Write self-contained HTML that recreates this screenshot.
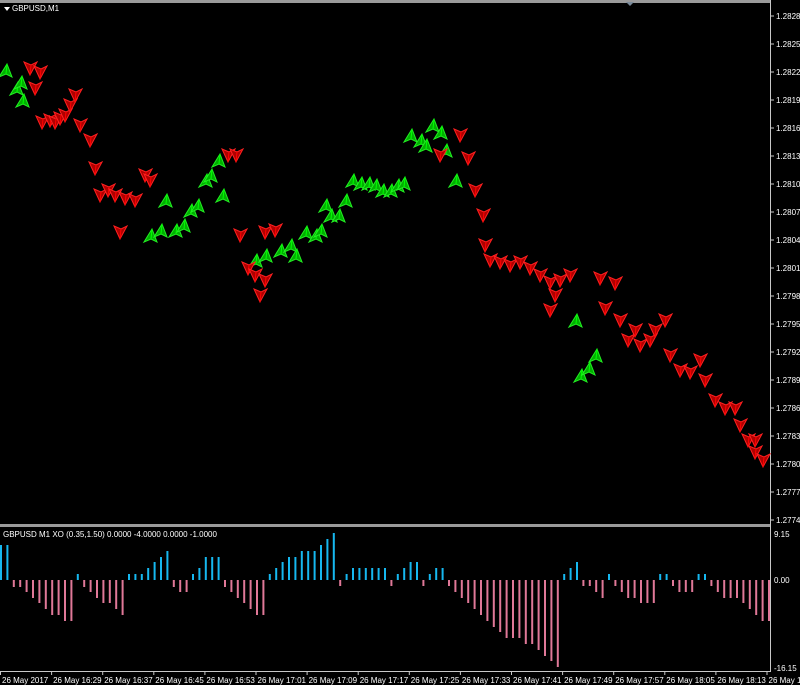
<!DOCTYPE html>
<html><head><meta charset="utf-8"><style>
html,body{margin:0;padding:0;background:#000;width:800px;height:685px;overflow:hidden}
svg{display:block}
text{font-family:"Liberation Sans",sans-serif;font-size:8px;fill:#fff}
</style></head><body>
<svg id="s" width="800" height="685" xmlns="http://www.w3.org/2000/svg">
<rect width="800" height="685" fill="#000"/>
<rect x="0" y="0" width="771" height="3" fill="#9a9a9a"/>
<polygon points="626,2 634,2 630,6" fill="#7a8a9a"/>
<polygon points="4,7 10,7 7,11" fill="#fff"/>
<text x="12" y="11">GBPUSD,M1</text>
<rect x="0" y="524" width="771" height="3" fill="#9a9a9a"/>
<line x1="770.5" y1="0" x2="770.5" y2="672" stroke="#c8c8c8"/>
<line x1="0" y1="671.5" x2="771" y2="671.5" stroke="#c8c8c8"/>
<text x="3" y="537">GBPUSD M1 XO (0.35,1.50) 0.0000 -4.0000 0.0000 -1.0000</text>
<text x="774" y="537">9.15</text>
<text x="774" y="583">0.00</text>
<text x="774" y="671">-16.15</text>
<g id="g"></g>
</svg>
<script>
var g=document.getElementById('g'),h='';
var p=['1.28285','1.28255','1.28225','1.28195','1.28165','1.28135','1.28105','1.28075','1.28045','1.28015','1.27985','1.27955','1.27925','1.27895','1.27865','1.27835','1.27805','1.27775','1.27745'];
for(var i=0;i<p.length;i++){var y=16+i*28.0;h+='<line x1="770" y1="'+y+'" x2="774" y2="'+y+'" stroke="#c8c8c8"/><text x="776" y="'+(y+3)+'">'+p[i]+'</text>';}
var t=['26 May 2017','26 May 16:29','26 May 16:37','26 May 16:45','26 May 16:53','26 May 17:01','26 May 17:09','26 May 17:17','26 May 17:25','26 May 17:33','26 May 17:41','26 May 17:49','26 May 17:57','26 May 18:05','26 May 18:13','26 May 1'];
for(i=0;i<t.length;i++){var x=i*51.1;h+='<line x1="'+(x+0.5)+'" y1="671" x2="'+(x+0.5)+'" y2="675" stroke="#c8c8c8"/><text x="'+(x+2)+'" y="683">'+t[i]+'</text>';}
var v=[35,35,-7,-7,-12,-18,-23,-29,-35,-35,-41,-41,6,-7,-12,-18,-23,-23,-29,-35,6,6,6,12,18,23,29,-7,-12,-12,6,12,23,23,23,-7,-12,-18,-23,-29,-35,-35,6,12,18,23,23,29,29,29,35,41,47,-6,6,12,12,12,12,12,12,-6,6,12,18,18,-6,6,12,12,-6,-12,-18,-23,-29,-35,-41,-47,-52,-58,-58,-58,-64,-64,-70,-76,-81,-87,6,12,18,-6,-6,-12,-18,6,-6,-12,-18,-18,-23,-23,-23,6,6,-6,-12,-12,-12,6,6,-6,-12,-18,-18,-18,-23,-29,-35,-41,-41];
for(i=0;i<v.length;i++){var x=i*6.4;var a=v[i];if(a>0)h+='<rect x="'+x.toFixed(1)+'" y="'+(580-a)+'" width="2" height="'+a+'" fill="#16b8f0"/>';else h+='<rect x="'+x.toFixed(1)+'" y="580" width="2" height="'+(-a)+'" fill="#e07898"/>';}
var G=[[5,70],[16,88],[22,100],[20,82],[150,235],[160,230],[165,200],[175,230],[183,225],[190,210],[197,205],[205,180],[210,175],[218,160],[222,195],[255,260],[265,255],[280,250],[290,245],[295,255],[305,232],[315,235],[320,230],[325,205],[330,215],[338,215],[345,200],[352,180],[360,183],[368,183],[375,185],[382,190],[390,190],[397,185],[403,183],[410,135],[420,140],[425,145],[432,125],[440,132],[445,150],[455,180],[580,375],[588,368],[595,355],[575,320]];
var R=[[30,68],[40,72],[35,88],[42,122],[50,120],[55,122],[60,118],[65,115],[70,105],[75,95],[80,125],[90,140],[95,168],[100,195],[108,190],[115,195],[125,198],[135,200],[145,175],[150,180],[120,232],[228,155],[236,155],[240,235],[248,268],[255,275],[260,295],[265,232],[275,230],[265,280],[440,155],[460,135],[468,158],[475,190],[483,215],[485,245],[490,260],[500,262],[510,265],[520,262],[530,268],[540,275],[550,282],[555,295],[560,280],[570,275],[550,310],[600,278],[605,308],[615,283],[620,320],[628,340],[635,330],[640,345],[650,340],[655,330],[665,320],[670,355],[680,370],[690,372],[700,360],[705,380],[715,400],[725,408],[735,408],[740,425],[748,440],[755,452],[763,460],[755,440]];
for(i=0;i<G.length;i++){var x=G[i][0]-6,y=G[i][1]-6;h+='<g transform="translate('+x+','+y+')"><polygon points="0,13 8,0 13,13 7,10" fill="#00b000" stroke="#22ee22" stroke-width="1"/><line x1="8" y1="0" x2="7" y2="10" stroke="#00ff00"/></g>';}
for(i=0;i<R.length;i++){var x=R[i][0]-6,y=R[i][1]-6;h+='<g transform="translate('+x+','+y+')"><polygon points="0,0 7,3 13,0 6,13" fill="#b00000" stroke="#ff2020" stroke-width="1"/><line x1="6" y1="13" x2="7" y2="3" stroke="#ff0000"/></g>';}
g.innerHTML=h;
</script>
</body></html>
